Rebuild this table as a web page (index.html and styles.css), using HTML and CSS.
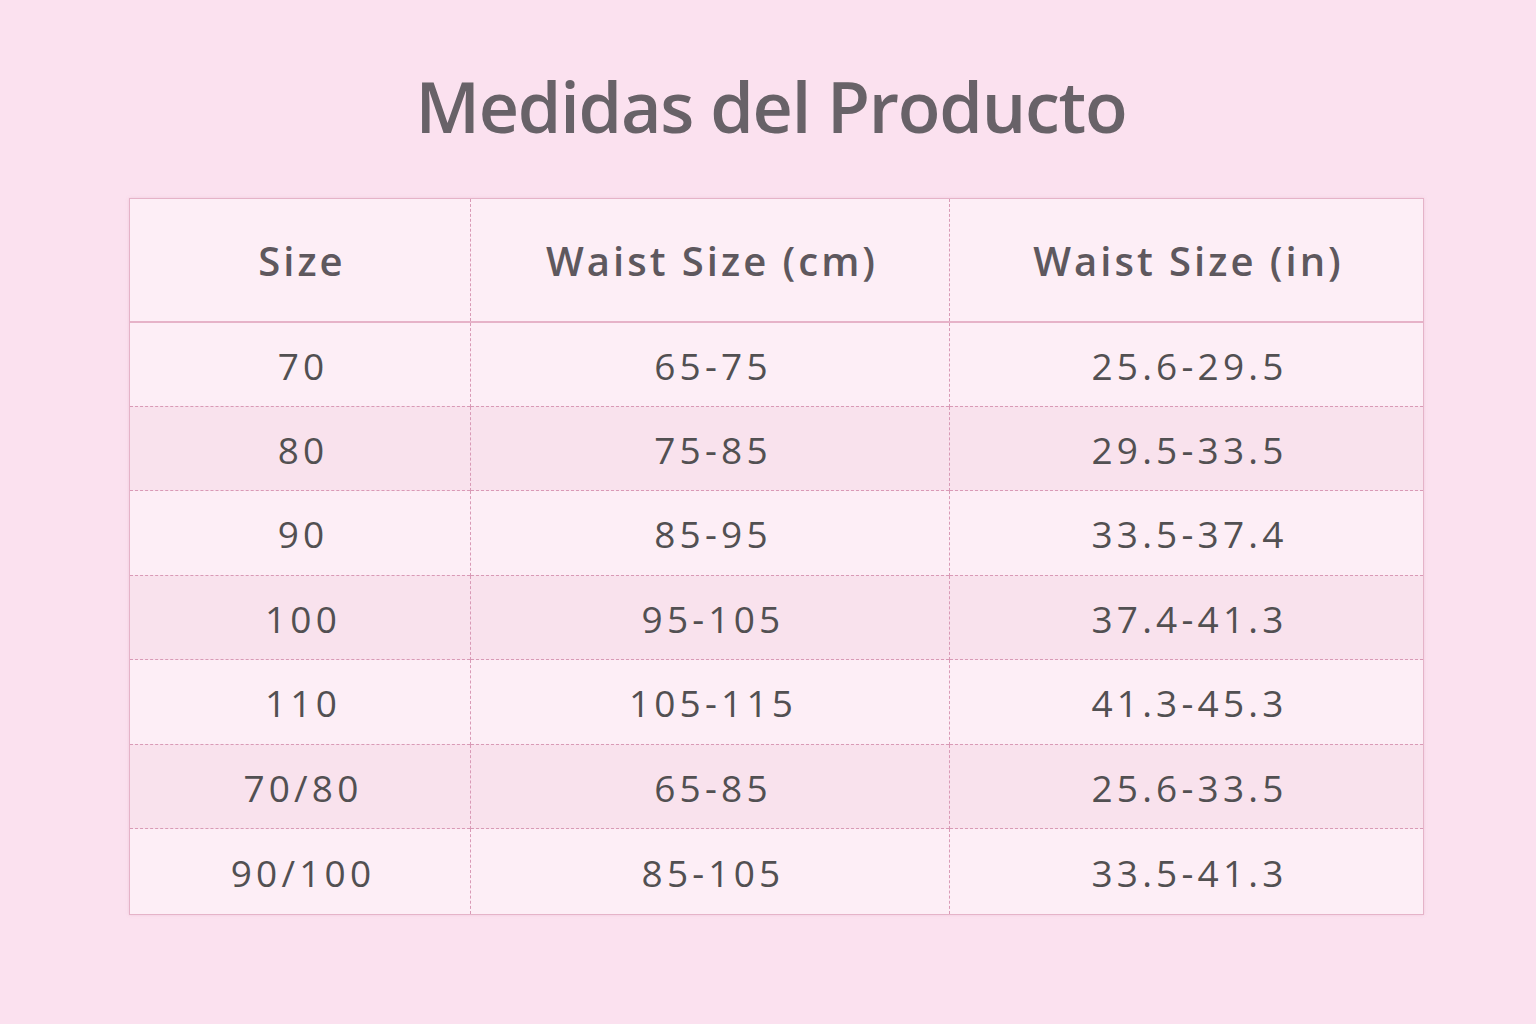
FILE: index.html
```html
<!DOCTYPE html>
<html lang="es">
<head>
<meta charset="utf-8">
<title>Medidas del Producto</title>
<link rel="stylesheet" href="styles.css">
</head>
<body>
<main class="page">
  <h1 class="title">Medidas del Producto</h1>
  <table class="sizes">
    <colgroup>
      <col class="c1"><col class="c2"><col class="c3">
    </colgroup>
    <thead>
      <tr><th>Size</th><th>Waist Size (cm)</th><th>Waist Size (in)</th></tr>
    </thead>
    <tbody>
      <tr><td>70</td><td>65-75</td><td>25.6-29.5</td></tr>
      <tr class="alt"><td>80</td><td>75-85</td><td>29.5-33.5</td></tr>
      <tr><td>90</td><td>85-95</td><td>33.5-37.4</td></tr>
      <tr class="alt"><td>100</td><td>95-105</td><td>37.4-41.3</td></tr>
      <tr><td>110</td><td>105-115</td><td>41.3-45.3</td></tr>
      <tr class="alt"><td>70/80</td><td>65-85</td><td>25.6-33.5</td></tr>
      <tr class="last"><td>90/100</td><td>85-105</td><td>33.5-41.3</td></tr>
    </tbody>
  </table>
</main>
</body>
</html>
```
FILE: styles.css
```css
html, body {
  margin: 0;
  padding: 0;
}
body {
  background: #fbe1ef;
  width: 1536px;
  height: 1024px;
  overflow: hidden;
  font-family: "Open Sans", "Noto Sans", sans-serif;
  color: #5c565c;
}
.page {
  display: flex;
  flex-direction: column;
  align-items: center;
  padding-top: 58px;
}
.title {
  margin: 0 0 0 6px;
  font-size: 70px;
  font-weight: 600;
  line-height: 96px;
  color: #686268;
  letter-spacing: -1.2px;
}
.sizes {
  margin-top: 44px;
  margin-left: 16px;
  width: 1294px;
  border-collapse: collapse;
  table-layout: fixed;
  border: 1px solid #e5b3c8;
  box-shadow: 0 0 3px rgba(220, 160, 190, 0.35);
}
.c1 { width: 341px; }
.c2 { width: 479px; }
.c3 { width: 474px; }
th, td {
  text-align: center;
  padding: 0;
  border-left: 1px dashed #d99ab6;
}
th:first-child, td:first-child {
  border-left: none;
}
thead tr {
  height: 123px;
  background: #fdeef6;
  border-bottom: 2px solid #e6b2c8;
}
th {
  font-size: 40px;
  font-weight: 600;
  letter-spacing: 3px;
  padding-left: 5px;
  padding-top: 2px;
  color: #5e585e;
}
tbody tr {
  height: 84.5px;
  background: #fdeef6;
  border-top: 1px dashed #d99ab6;
}
tbody tr:first-child {
  border-top: none;
}
tbody tr.alt {
  background: #f9e2ed;
}
tbody tr.last {
  height: 86px;
}
td {
  font-size: 37px;
  font-weight: 400;
  letter-spacing: 4.2px;
  padding-left: 7px;
  padding-top: 2px;
  color: #525052;
}
```
